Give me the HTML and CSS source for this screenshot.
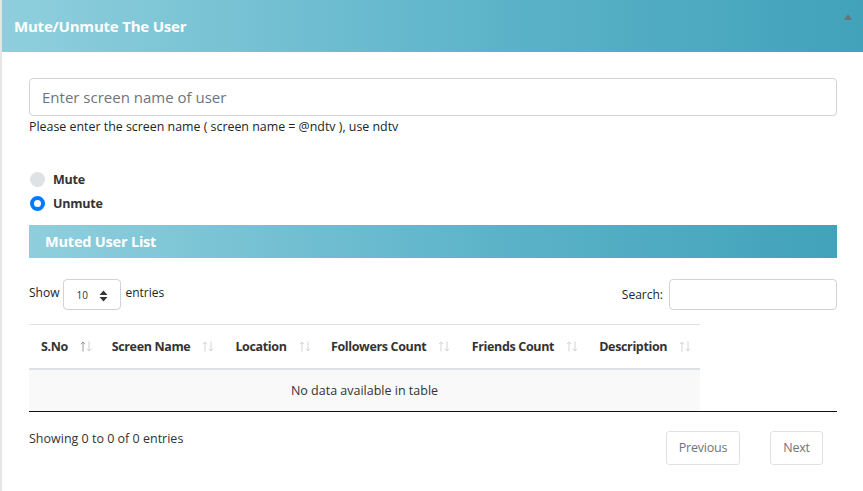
FILE: index.html
```html
<!DOCTYPE html>
<html>
<head>
<meta charset="utf-8">
<link rel="stylesheet" href="styles.css">
</head>
<body>
<div class="card">
  <div class="card-header">
    <h2 class="title">Mute/Unmute The User</h2>
    <span class="collapse-tri"></span>
  </div>
  <div class="card-body">
    <input class="name-input" type="text" placeholder="Enter screen name of user">
    <div class="help">Please enter the screen name ( screen name = @ndtv ), use ndtv</div>
    <div class="radios">
      <label class="radio"><span class="dot"></span>Mute</label>
      <label class="radio"><span class="dot on"></span>Unmute</label>
    </div>
    <div class="list-bar">Muted User List</div>
    <div class="dt-top">
      <div class="length">Show <span class="sel">10<svg class="updown" width="9" height="12" viewBox="0 0 9 12"><path d="M4.5 0.5 L8.5 5 H0.5 Z M0.5 7 H8.5 L4.5 11.5 Z" fill="#333"/></svg></span> entries</div>
      <div class="search">Search: <span class="search-box"></span></div>
    </div>
    <div class="table-wrap">
      <table class="dt">
        <thead>
          <tr>
            <th>S.No<svg class="sort" width="12" height="11" viewBox="0 0 12 11"><path d="M3 10.5V1 M1 3.2 L3 1 L5 3.2" stroke="#9a9a9a" fill="none" stroke-width="1"/><path d="M9 0.5V10 M7 7.8 L9 10 L11 7.8" stroke="#cfcfcf" fill="none" stroke-width="1"/></svg></th>
            <th>Screen Name<svg class="sort" width="12" height="11" viewBox="0 0 12 11"><path d="M3 10.5V1 M1 3.2 L3 1 L5 3.2" stroke="#d4d4d4" fill="none" stroke-width="1"/><path d="M9 0.5V10 M7 7.8 L9 10 L11 7.8" stroke="#d4d4d4" fill="none" stroke-width="1"/></svg></th>
            <th>Location<svg class="sort" width="12" height="11" viewBox="0 0 12 11"><path d="M3 10.5V1 M1 3.2 L3 1 L5 3.2" stroke="#d4d4d4" fill="none" stroke-width="1"/><path d="M9 0.5V10 M7 7.8 L9 10 L11 7.8" stroke="#d4d4d4" fill="none" stroke-width="1"/></svg></th>
            <th>Followers Count<svg class="sort" width="12" height="11" viewBox="0 0 12 11"><path d="M3 10.5V1 M1 3.2 L3 1 L5 3.2" stroke="#d4d4d4" fill="none" stroke-width="1"/><path d="M9 0.5V10 M7 7.8 L9 10 L11 7.8" stroke="#d4d4d4" fill="none" stroke-width="1"/></svg></th>
            <th>Friends Count<svg class="sort" width="12" height="11" viewBox="0 0 12 11"><path d="M3 10.5V1 M1 3.2 L3 1 L5 3.2" stroke="#d4d4d4" fill="none" stroke-width="1"/><path d="M9 0.5V10 M7 7.8 L9 10 L11 7.8" stroke="#d4d4d4" fill="none" stroke-width="1"/></svg></th>
            <th>Description<svg class="sort" width="12" height="11" viewBox="0 0 12 11"><path d="M3 10.5V1 M1 3.2 L3 1 L5 3.2" stroke="#d4d4d4" fill="none" stroke-width="1"/><path d="M9 0.5V10 M7 7.8 L9 10 L11 7.8" stroke="#d4d4d4" fill="none" stroke-width="1"/></svg></th>
          </tr>
        </thead>
        <tbody>
          <tr><td colspan="6">No data available in table</td></tr>
        </tbody>
      </table>
    </div>
    <div class="dt-bottom">
      <div class="info">Showing 0 to 0 of 0 entries</div>
      <div class="pager">
        <span class="pbtn prev">Previous</span>
        <span class="pbtn next">Next</span>
      </div>
    </div>
  </div>
</div>
</body>
</html>
```
FILE: styles.css
```css
* { box-sizing: border-box; }
html, body { margin: 0; padding: 0; background: #fff; }
body {
  font-family: "Open Sans", "Noto Sans", Arial, sans-serif;
  color: #212529;
  width: 863px;
  height: 491px;
  overflow: hidden;
}
.card {
  border-left: 2px solid #e6e6e6;
  height: 491px;
}
.card-header {
  height: 52px;
  background: linear-gradient(90deg, #8fcfdd 0%, #5ab2c8 60%, #41a2ba 100%);
  display: flex;
  align-items: center;
  padding-left: 12px;
  position: relative;
}
.title {
  margin: 0;
  color: #fff;
  font-size: 15px;
  font-weight: 700;
  letter-spacing: -0.2px;
}
.collapse-tri {
  position: absolute;
  right: 11px;
  top: 14px;
  width: 0; height: 0;
  border-left: 4px solid transparent;
  border-right: 4px solid transparent;
  border-bottom: 6px solid #717171;
}
.card-body {
  padding: 26px 25px 0 27px;
}
.name-input {
  display: block;
  width: 808px;
  height: 38px;
  border: 1px solid #ced4da;
  border-radius: 4px;
  padding: 0 12px;
  font-family: inherit;
  font-size: 15px;
  color: #495057;
  outline: none;
}
.name-input::placeholder { color: #6c757d; }
.help {
  font-size: 12.4px;
  color: #212529;
  margin-top: 2px;
  line-height: 17px;
}
.radios {
  margin-top: 35px;
  display: flex;
  flex-direction: column;
  gap: 5px;
}
.radio {
  display: flex;
  align-items: center;
  font-size: 12.5px;
  font-weight: 700;
  color: #333;
  height: 19px;
  letter-spacing: -0.2px;
}
.dot {
  width: 15px; height: 15px;
  border-radius: 50%;
  background: #dee2e6;
  margin: 0 8px 0 1px;
  flex: none;
}
.dot.on {
  background: #fff;
  border: 4px solid #007bff;
}
.list-bar {
  margin-top: 12px;
  height: 33px;
  background: linear-gradient(90deg, #8fcfdd 0%, #5ab2c8 60%, #41a2ba 100%);
  color: #fff;
  font-weight: 700;
  font-size: 14.5px;
  display: flex;
  align-items: center;
  padding-left: 16px;
  letter-spacing: -0.2px;
  width: 808px;
}
.dt-top {
  display: flex;
  justify-content: space-between;
  align-items: flex-start;
  width: 808px;
  margin-top: 21px;
  font-size: 12px;
}
.length {
  display: flex;
  align-items: flex-start;
  gap: 4px;
  line-height: 27px;
}
.sel {
  display: inline-flex;
  align-items: center;
  justify-content: space-between;
  width: 58px;
  height: 31px;
  border: 1px solid #ced4da;
  border-radius: 4px;
  font-size: 10px;
  padding: 2px 12px 0 12px;
  color: #333;
}
.search {
  display: flex;
  align-items: center;
  gap: 6px;
}
.search-box {
  width: 168px;
  height: 31px;
  border: 1px solid #ced4da;
  border-radius: 4px;
}
.table-wrap {
  margin-top: 14px;
  width: 808px;
  border-bottom: 1px solid #111;
}
.dt {
  border-collapse: collapse;
  width: 671px;
  font-size: 12.5px;
}
.dt th {
  text-align: left;
  font-weight: 700;
  color: #333;
  height: 44px;
  padding: 0 0 0 12px;
  border-top: 1px solid #dee2e6;
  border-bottom: 2px solid #dee2e6;
  white-space: nowrap;
  letter-spacing: -0.35px;
}
.sort {
  display: inline-block;
  vertical-align: -1px;
  margin-left: 12px;
  margin-right: 6px;
}
.dt td {
  background: #f9f9f9;
  height: 42px;
  text-align: center;
  font-size: 12.5px;
  color: #333;
}
.dt-bottom {
  display: flex;
  justify-content: space-between;
  align-items: flex-start;
  width: 808px;
  padding-top: 18px;
}
.info {
  font-size: 12.5px;
  color: #333;
  line-height: 17px;
}
.pager {
  display: flex;
  gap: 30px;
  margin-right: 14px;
  margin-top: 1px;
}
.pbtn {
  display: flex;
  align-items: center;
  justify-content: center;
  height: 34px;
  border: 1px solid #dee2e6;
  border-radius: 3px;
  font-size: 12.5px;
  color: #6c757d;
  letter-spacing: -0.2px;
}
.prev { width: 74px; }
.next { width: 53px; }
```
